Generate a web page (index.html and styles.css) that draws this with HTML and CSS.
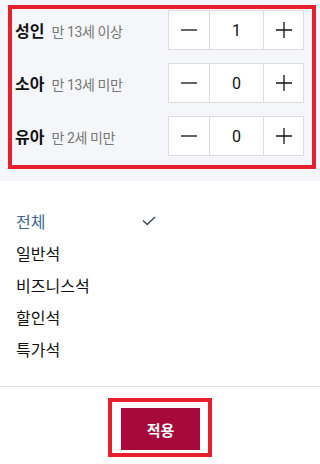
FILE: index.html
```html
<!DOCTYPE html>
<html lang="ko">
<head>
    <meta charset="UTF-8">
    <meta name="viewport" content="width=device-width, initial-scale=1.0">
    <title>인원 및 좌석 선택</title>
    <link rel="stylesheet" href="styles.css">
</head>
<body>

<!-- 승객 인원 선택 -->
<div class="guest-panel">
    <div class="guest-box">
        <div class="guest-row">
            <div class="guest-label"><strong>성인</strong><span>만 13세 이상</span></div>
            <div class="stepper">
                <button class="step-btn" aria-label="빼기">
                    <svg width="16" height="16" viewBox="0 0 16 16"><path d="M0 8h16" stroke="#111" stroke-width="1.3"/></svg>
                </button>
                <div class="step-value">1</div>
                <button class="step-btn" aria-label="더하기">
                    <svg width="16" height="16" viewBox="0 0 16 16"><path d="M0 8h16M8 0v16" stroke="#111" stroke-width="1.3"/></svg>
                </button>
            </div>
        </div>
        <div class="guest-row">
            <div class="guest-label"><strong>소아</strong><span>만 13세 미만</span></div>
            <div class="stepper">
                <button class="step-btn" aria-label="빼기">
                    <svg width="16" height="16" viewBox="0 0 16 16"><path d="M0 8h16" stroke="#111" stroke-width="1.3"/></svg>
                </button>
                <div class="step-value">0</div>
                <button class="step-btn" aria-label="더하기">
                    <svg width="16" height="16" viewBox="0 0 16 16"><path d="M0 8h16M8 0v16" stroke="#111" stroke-width="1.3"/></svg>
                </button>
            </div>
        </div>
        <div class="guest-row">
            <div class="guest-label"><strong>유아</strong><span>만 2세 미만</span></div>
            <div class="stepper">
                <button class="step-btn" aria-label="빼기">
                    <svg width="16" height="16" viewBox="0 0 16 16"><path d="M0 8h16" stroke="#111" stroke-width="1.3"/></svg>
                </button>
                <div class="step-value">0</div>
                <button class="step-btn" aria-label="더하기">
                    <svg width="16" height="16" viewBox="0 0 16 16"><path d="M0 8h16M8 0v16" stroke="#111" stroke-width="1.3"/></svg>
                </button>
            </div>
        </div>
    </div>
</div>

<!-- 좌석 등급 -->
<ul class="seat-list">
    <li class="seat-item active"><span class="seat-name">전체</span>
        <svg class="check" width="14" height="10" viewBox="0 0 14 10"><path d="M1 4.5l4.2 4L13 1" fill="none" stroke="#3a4654" stroke-width="1.4"/></svg>
    </li>
    <li class="seat-item"><span class="seat-name">일반석</span></li>
    <li class="seat-item"><span class="seat-name">비즈니스석</span></li>
    <li class="seat-item"><span class="seat-name">할인석</span></li>
    <li class="seat-item"><span class="seat-name">특가석</span></li>
</ul>

<!-- 하단 버튼 -->
<div class="footer">
    <div class="apply-box">
        <button class="btn-apply">적용</button>
    </div>
</div>

</body>
</html>
```

FILE: styles.css
```css
body {
    font-family: Roboto, "Noto Sans CJK KR", sans-serif;
    background-color: #fff;
    color: #111;
    margin: 0;
    padding: 0;
}

/* 승객 인원 */
.guest-panel {
    background-color: #f4f6f9;
    padding: 5px 4px 12px 8px;
}
.guest-box {
    border: 4px solid #e8202e;
    padding: 1px 8px 9px 3px;
    display: flex;
    flex-direction: column;
    gap: 13px;
}
.guest-row {
    display: flex;
    align-items: center;
    justify-content: space-between;
    height: 40px;
}
.guest-label strong {
    font-size: 16px;
    font-weight: bold;
    color: #111;
    margin-right: 7px;
}
.guest-label span {
    font-size: 14px;
    color: #777;
    letter-spacing: -0.4px;
}
.stepper {
    display: flex;
    height: 40px;
    background-color: #fff;
}
.step-btn {
    width: 42px;
    height: 40px;
    border: 1px solid #dcdcdc;
    background-color: #fff;
    padding: 0;
    display: flex;
    align-items: center;
    justify-content: center;
    cursor: pointer;
}
.step-btn:last-child {
    width: 41px;
}
.step-value {
    width: 53px;
    border-top: 1px solid #dcdcdc;
    border-bottom: 1px solid #dcdcdc;
    display: flex;
    align-items: center;
    justify-content: center;
    font-size: 16px;
    color: #111;
}

/* 좌석 등급 */
.seat-list {
    list-style: none;
    margin: 0;
    padding: 24px 0 21px 16px;
}
.seat-item {
    display: flex;
    align-items: center;
    height: 32px;
    font-size: 16px;
    color: #111;
}
.seat-item.active {
    color: #3d6790;
}
.seat-name {
    width: 126px;
}

/* 하단 */
.footer {
    border-top: 1px solid #e2e2e2;
    padding-top: 11px;
    display: flex;
    justify-content: center;
}
.apply-box {
    border: 4px solid #e8202e;
    padding: 6px 8px 3px 9px;
}
.btn-apply {
    width: 79px;
    height: 42px;
    border: none;
    background-color: #a6093b;
    color: #fff;
    font-family: Roboto, "Noto Sans CJK KR", sans-serif;
    font-size: 15px;
    font-weight: bold;
    cursor: pointer;
}
```
